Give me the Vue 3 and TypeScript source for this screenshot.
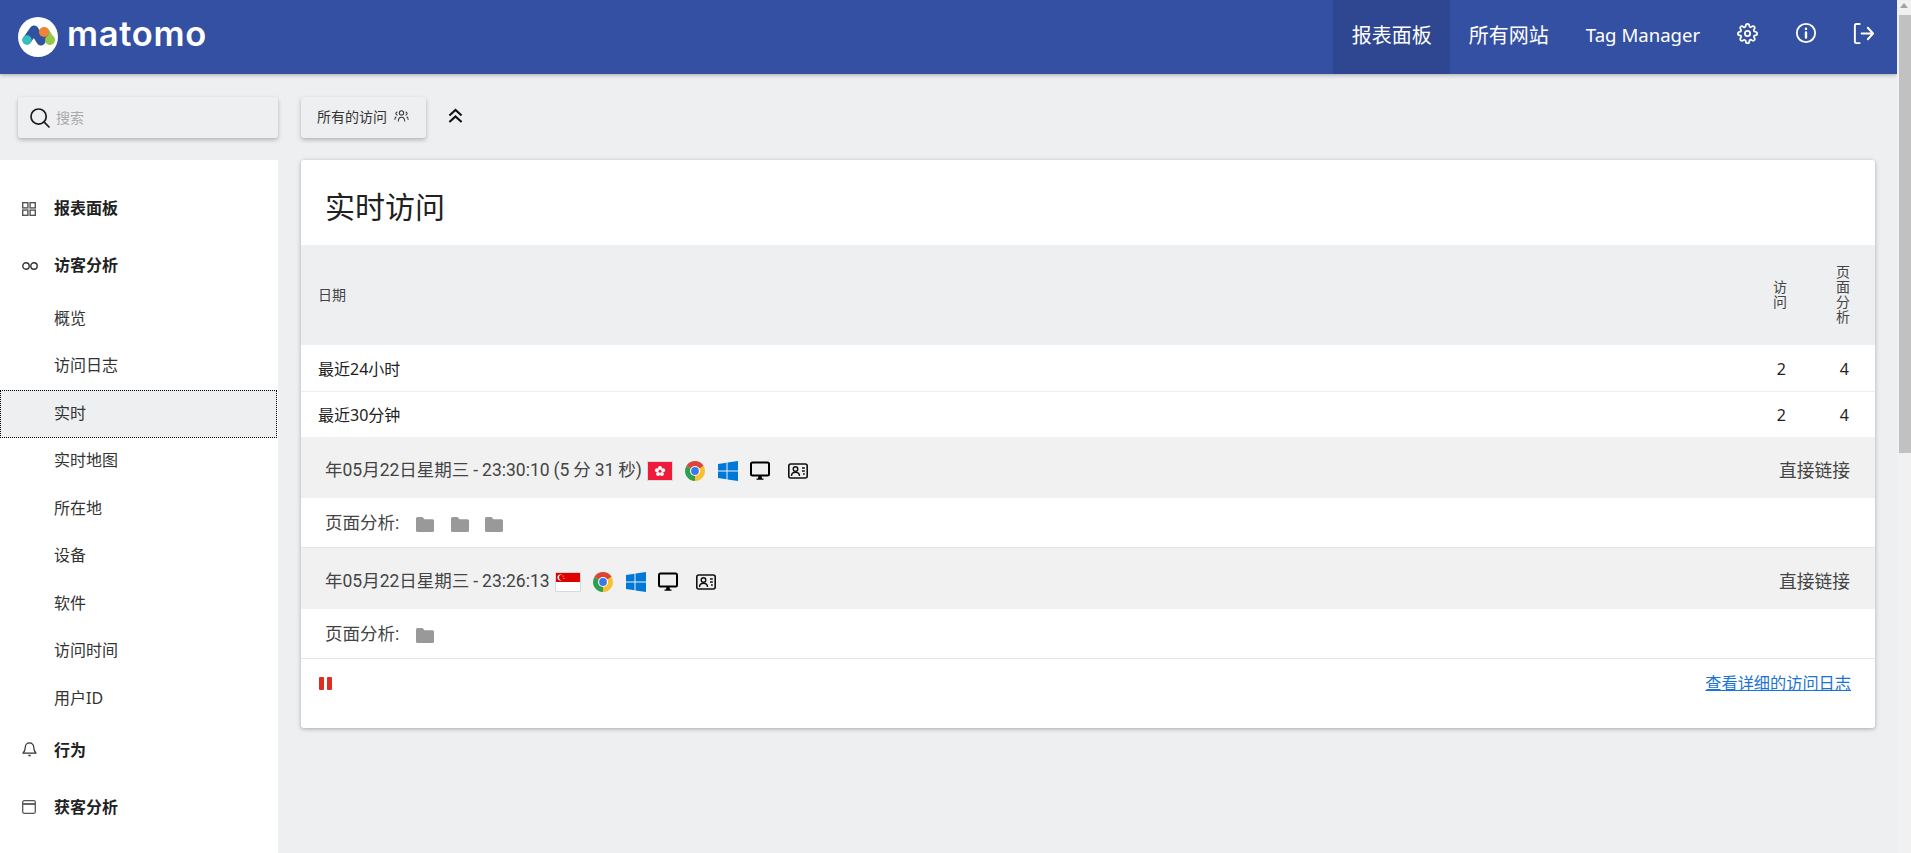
<script setup lang="ts">
interface Visit {
  time: string
  flag: 'hk' | 'sg'
  pages: number
}
const subItems: string[] = ['概览', '访问日志', '实时', '实时地图', '所在地', '设备', '软件', '访问时间', '用户ID']
const visits: Visit[] = [
  { time: '年05月22日星期三 - 23:30:10 (5 分 31 秒)', flag: 'hk', pages: 3 },
  { time: '年05月22日星期三 - 23:26:13', flag: 'sg', pages: 1 },
]
const rows = [
  { label: '最近24小时', visits: 2, pages: 4 },
  { label: '最近30分钟', visits: 2, pages: 4 },
]
const gearPath =
  'M19.4 15a1.65 1.65 0 0 0 .33 1.82l.06.06a2 2 0 0 1 0 2.83 2 2 0 0 1-2.83 0l-.06-.06a1.65 1.65 0 0 0-1.82-.33 1.65 1.65 0 0 0-1 1.51V21a2 2 0 0 1-2 2 2 2 0 0 1-2-2v-.09A1.65 1.65 0 0 0 9 19.4a1.65 1.65 0 0 0-1.82.33l-.06.06a2 2 0 0 1-2.83 0 2 2 0 0 1 0-2.83l.06-.06a1.65 1.65 0 0 0 .33-1.82 1.65 1.65 0 0 0-1.51-1H3a2 2 0 0 1-2-2 2 2 0 0 1 2-2h.09A1.65 1.65 0 0 0 4.6 9a1.65 1.65 0 0 0-.33-1.82l-.06-.06a2 2 0 0 1 0-2.83 2 2 0 0 1 2.83 0l.06.06a1.65 1.65 0 0 0 1.82.33H9a1.65 1.65 0 0 0 1-1.51V3a2 2 0 0 1 2-2 2 2 0 0 1 2 2v.09a1.65 1.65 0 0 0 1 1.51 1.65 1.65 0 0 0 1.82-.33l.06-.06a2 2 0 0 1 2.83 0 2 2 0 0 1 0 2.83l-.06.06a1.65 1.65 0 0 0-.33 1.82V9a1.65 1.65 0 0 0 1.51 1H21a2 2 0 0 1 2 2 2 2 0 0 1-2 2h-.09a1.65 1.65 0 0 0-1.51 1z'
</script>

<template>
  <div class="root">
    <div class="page">
      <header class="topbar">
        <div class="brand">
          <svg class="logo" viewBox="0 0 40 40" width="40" height="40">
            <circle cx="20" cy="20" r="20" fill="#fff" />
            <path d="M27 15 L32 23" stroke="#95c748" stroke-width="9" stroke-linecap="round" fill="none" />
            <path d="M9 23 L16 13 L23 24 L26 16" stroke="#3152a0" stroke-width="9" stroke-linecap="round" stroke-linejoin="round" fill="none" />
            <circle cx="9" cy="23" r="4.7" fill="#35bfc0" />
            <circle cx="26" cy="15" r="5" fill="#f38334" />
            <circle cx="32" cy="23" r="5" fill="#95c748" />
          </svg>
          <span class="wordmark">matomo</span>
        </div>
        <nav class="nav">
          <a class="nav-item active">报表面板</a>
          <a class="nav-item">所有网站</a>
          <a class="nav-item tag">Tag Manager</a>
          <a class="nav-item icon-item">
            <svg viewBox="0 0 24 24" width="21" height="21" fill="none" stroke="#fff" stroke-width="2">
              <circle cx="12" cy="12" r="3" />
              <path :d="gearPath" />
            </svg>
          </a>
          <a class="nav-item icon-item">
            <svg viewBox="0 0 24 24" width="22" height="22" fill="none" stroke="#fff" stroke-width="2" stroke-linecap="round">
              <circle cx="12" cy="12" r="10" />
              <path d="M12 11.5v5.5M12 7.2v.3" stroke-width="2.6" />
            </svg>
          </a>
          <a class="nav-item icon-item exit-item">
            <svg viewBox="0 0 24 24" width="23" height="23" fill="none" stroke="#fff" stroke-width="2" stroke-linecap="round" stroke-linejoin="round">
              <path d="M8 2H4.5A1.5 1.5 0 0 0 3 3.5v17A1.5 1.5 0 0 0 4.5 22H8" />
              <path d="M10 12h12M16.5 6l5.5 6-5.5 6" />
            </svg>
          </a>
        </nav>
      </header>

      <div class="content">
        <div class="search">
          <svg viewBox="0 0 20 20" width="20" height="20" fill="none" stroke="#1c1c1c" stroke-width="1.7" stroke-linecap="round">
            <circle cx="8.6" cy="8.6" r="7.6" />
            <path d="M14.2 14.2l4.8 4.8" />
          </svg>
          <span class="placeholder">搜索</span>
        </div>
        <div class="toolbar">
          <div class="segment">
            <span class="segment-label">所有的访问</span>
            <svg viewBox="0 0 16 14" width="15" height="13" fill="none" stroke="#333" stroke-width="1.1">
              <circle cx="8" cy="3.2" r="2.3" />
              <path d="M4.5 12.5c0-2.600 1.200-4.700 3.500-4.700s3.500 2.100 3.500 4.700" />
              <path d="M3.700 2.200a1.700 1.700 0 0 0 0 3.400M12.300 2.200a1.700 1.700 0 0 1 0 3.400" />
              <path d="M.8 10.500c0-1.500.6-2.700 1.600-3.200M15.200 10.500c0-1.500-.6-2.700-1.600-3.200" />
            </svg>
          </div>
          <svg class="chevrons" viewBox="0 0 16 16" width="15" height="16" fill="none" stroke="#111" stroke-width="2.2">
            <path d="M1.5 7.5L8 1.5l6.5 6M1.5 14.5L8 8.5l6.5 6" />
          </svg>
        </div>

        <aside class="sidebar">
          <div class="top-item">
            <span class="side-icon">
              <svg viewBox="0 0 14 14" width="14" height="14" fill="none" stroke="#555" stroke-width="1.4">
                <rect x=".7" y=".7" width="5.2" height="5.2" />
                <rect x="8.1" y=".7" width="5.2" height="5.2" />
                <rect x=".7" y="8.1" width="5.2" height="5.2" />
                <rect x="8.1" y="8.1" width="5.2" height="5.2" />
              </svg>
            </span>
            报表面板
          </div>
          <div class="top-item">
            <span class="side-icon">
              <svg viewBox="0 0 16 8" width="16" height="8" fill="none" stroke="#333" stroke-width="1.4">
                <circle cx="4" cy="4" r="3.2" />
                <circle cx="12" cy="4" r="3.2" />
              </svg>
            </span>
            访客分析
          </div>
          <div v-for="s in subItems" :key="s" class="sub-item" :class="{ current: s === '实时' }">{{ s }}</div>
          <div class="top-item">
            <span class="side-icon bell">
              <svg viewBox="0 0 16 18" width="15" height="17" fill="none" stroke="#333" stroke-width="1.3" stroke-linejoin="round">
                <path d="M3.5 7.5a4.5 4.5 0 0 1 9 0c0 3.5.8 5 2.5 6.500H1c1.700-1.500 2.500-3 2.500-6.500z" />
                <path d="M6.800 16.500h2.400" stroke-width="1.600" />
              </svg>
            </span>
            行为
          </div>
          <div class="top-item">
            <span class="side-icon">
              <svg viewBox="0 0 14 14" width="14" height="14" fill="none" stroke="#555" stroke-width="1.3">
                <rect x=".7" y=".7" width="12.6" height="12.6" rx="1.500" />
                <path d="M.7 4h12.600" stroke-width="1.800" />
              </svg>
            </span>
            获客分析
          </div>
        </aside>

        <main class="card">
          <h2 class="title">实时访问</h2>
          <table class="stats">
            <thead>
              <tr>
                <th class="date-col">日期</th>
                <th class="num-col visits-col"><span class="stack">访问</span></th>
                <th class="num-col pages-col"><span class="stack">页面分析</span></th>
              </tr>
            </thead>
            <tbody>
              <tr v-for="r in rows" :key="r.label">
                <td class="date-col">{{ r.label }}</td>
                <td class="num-col visits-col">{{ r.visits }}</td>
                <td class="num-col pages-col">{{ r.pages }}</td>
              </tr>
            </tbody>
          </table>

          <section v-for="v in visits" :key="v.time" class="visit">
            <div class="visit-head">
              <span class="visit-time">{{ v.time }}</span>
              <svg v-if="v.flag === 'hk'" class="ic flag" viewBox="0 0 26 20" width="26" height="20">
                <rect x=".5" y=".5" width="25" height="19" fill="#ee1c3a" stroke="#d8d8d8" />
                <g fill="#fff">
                  <circle cx="13" cy="7" r="2" />
                  <circle cx="16.100" cy="9.300" r="2" />
                  <circle cx="14.900" cy="12.900" r="2" />
                  <circle cx="11.100" cy="12.900" r="2" />
                  <circle cx="9.900" cy="9.300" r="2" />
                </g>
                <circle cx="13" cy="10" r="1" fill="#ee1c3a" />
              </svg>
              <svg v-else class="ic flag" viewBox="0 0 26 20" width="26" height="20">
                <rect x=".5" y=".5" width="25" height="19" fill="#fff" stroke="#d8d8d8" />
                <rect x="1" y="1" width="24" height="9" fill="#e00000" />
                <circle cx="5.500" cy="5.500" r="3" fill="#fff" />
                <circle cx="6.800" cy="5.500" r="2.800" fill="#e00000" />
                <circle cx="8" cy="4" r=".6" fill="#fff" />
                <circle cx="9" cy="6.500" r=".6" fill="#fff" />
              </svg>
              <svg class="ic chrome" viewBox="0 0 20 20" width="20" height="20">
                <path d="M10 10L1.340 5A10 10 0 0 1 18.660 5Z" fill="#db4437" />
                <path d="M10 10L18.660 5A10 10 0 0 1 10 20Z" fill="#fbc02d" />
                <path d="M10 10L10 20A10 10 0 0 1 1.340 5Z" fill="#2e9e4f" />
                <circle cx="10" cy="10" r="5" fill="#fff" />
                <circle cx="10" cy="10" r="3.900" fill="#3b78e7" />
              </svg>
              <svg class="ic win" viewBox="0 0 20 20" width="20" height="20" fill="#0078d7">
                <path d="M0 3l8.500-1.200v7.700H0zM9.500 1.600L20 0v9.500H9.500zM0 10.500h8.500v7.700L0 17zM9.500 10.500H20V20L9.500 18.400z" />
              </svg>
              <svg class="ic mon" viewBox="0 0 20 20" width="20" height="20">
                <rect x="1" y="1.500" width="18" height="13" rx="1.500" fill="none" stroke="#000" stroke-width="2" />
                <path d="M8.500 15h3l.5 2.500h1.500v1.300h-7v-1.300H8z" fill="#000" />
              </svg>
              <svg class="ic contact" viewBox="0 0 20 16" width="20" height="16" fill="none" stroke="#111" stroke-width="1.400">
                <rect x=".8" y="1" width="18.400" height="14" rx="2" stroke-width="1.600" />
                <circle cx="7.500" cy="6" r="2.300" />
                <path d="M3.500 13c0-2.500 1.500-3.800 4-3.800s4 1.300 4 3.800" />
                <path d="M14 5h2.800M14 8h2.800M15 11h1.800" />
              </svg>
              <span class="direct">直接链接</span>
            </div>
            <div class="visit-pages">
              <span class="pages-label">页面分析:</span>
              <svg v-for="n in v.pages" :key="n" class="folder" viewBox="0 0 18 15" width="18" height="15">
                <path d="M1.500 0H6.500L8.500 2.200H16.500A1.500 1.500 0 0 1 18 3.700V13.500A1.500 1.500 0 0 1 16.500 15H1.500A1.500 1.500 0 0 1 0 13.500V1.500A1.500 1.500 0 0 1 1.500 0Z" fill="#999" />
              </svg>
            </div>
          </section>

          <footer class="card-foot">
            <span class="pause"><i></i><i></i></span>
            <a class="log-link">查看详细的访问日志</a>
          </footer>
        </main>
      </div>
    </div>
    <div class="scrollbar">
      <span class="arrow"></span>
      <span class="thumb"></span>
    </div>
  </div>
</template>

<style>
html, body { margin: 0; padding: 0; overflow: hidden; background: #eeeff1; }
</style>

<style scoped>
.root {
  display: flex;
  width: 1911px;
  height: 853px;
  overflow: hidden;
  font-family: "Noto Sans", "Noto Sans CJK SC", sans-serif;
  color: #212121;
  background: #eeeff1;
}
.page { width: 1897px; flex: none; display: flex; flex-direction: column; }
.topbar {
  height: 74px;
  flex: none;
  background: #3450a3;
  display: flex;
  justify-content: space-between;
  box-shadow: 0 1px 4px rgba(0, 0, 0, .3);
  position: relative;
}
.brand { display: flex; align-items: center; gap: 9px; padding-left: 18px; }
.logo { display: block; }
.wordmark {
  font-family: Inter, sans-serif;
  font-weight: 600;
  font-size: 34.500px;
  letter-spacing: .7px;
  color: #fff;
  line-height: 1;
  margin-top: -6px;
}
.nav { display: flex; margin-right: 1.300px; }
.nav-item {
  display: flex;
  align-items: center;
  padding: 0 18.500px 5px;
  color: #fff;
  font-size: 20px;
}
.nav-item.active { background: #2f4790; }
.nav-item.tag { font-size: 18.600px; }
.nav-item.icon-item { padding-bottom: 8px; }
.nav-item.exit-item { margin-left: -2.500px; margin-right: 2.500px; }
.content {
  display: grid;
  grid-template-columns: 278px 1fr;
  grid-template-rows: 41px 1fr;
  column-gap: 23px;
  row-gap: 22px;
  padding: 23px 22px 0 0;
  flex: 1;
  min-height: 0;
}
.search {
  margin-left: 18px;
  background: #eeeff1;
  border-radius: 3px;
  box-shadow: 0 2px 4px rgba(0, 0, 0, .25);
  display: flex;
  align-items: center;
  padding-left: 12px;
  gap: 6px;
}
.placeholder { color: #aaa; font-size: 14px; margin-top: -2px; }
.toolbar { display: flex; align-items: center; gap: 22px; }
.segment {
  width: 125px;
  height: 41px;
  box-sizing: border-box;
  padding-left: 16px;
  display: flex;
  align-items: center;
  gap: 7px;
  font-size: 14px;
  color: #333;
  border-radius: 3px;
  box-shadow: 0 2px 4px rgba(0, 0, 0, .25);
}
.segment-label { margin-top: -4px; }
.segment svg { margin-top: -3px; }
.chevrons { margin-top: -4px; }
.sidebar { background: #fff; padding-top: 21px; }
.top-item {
  height: 57px;
  box-sizing: border-box;
  padding-bottom: 5px;
  display: flex;
  align-items: center;
  font-size: 16px;
  font-weight: 700;
}
.side-icon { width: 54px; padding-left: 22px; box-sizing: border-box; display: flex; flex: none; }
.side-icon svg { display: block; margin-top: 3px; }
.side-icon.bell svg { margin-top: -1px; }
.sub-item {
  height: 47.500px;
  box-sizing: border-box;
  padding: 0 0 4px 54px;
  display: flex;
  align-items: center;
  font-size: 16px;
  color: #333;
}
.sub-item.current {
  background: #eeeff1;
  border: 1px dotted #000;
  padding-left: 53px;
  margin-right: 1px;
}
.card {
  background: #fff;
  border-radius: 3px;
  box-shadow: 0 1px 4px rgba(0, 0, 0, .3);
  align-self: start;
  height: 568px;
  display: flex;
  flex-direction: column;
}
.title {
  margin: 0;
  height: 85px;
  box-sizing: border-box;
  padding: 25px 0 0 24px;
  font-size: 30px;
  font-weight: 400;
  line-height: 44px;
  color: #212121;
}
.stats { width: 100%; border-collapse: collapse; table-layout: fixed; flex: none; }
.stats th {
  height: 100px;
  padding: 0 0 2px;
  box-sizing: border-box;
  background: #eeeff1;
  font-size: 14px;
  font-weight: 400;
  color: #444;
  vertical-align: middle;
}
.stats th.date-col { text-align: left; padding-left: 17px; }
.stats td {
  padding: 2px 0 0;
  font-size: 16px;
  line-height: 22px;
  color: #212121;
  height: 46px;
  box-sizing: border-box;
  border-bottom: 1px solid #eee;
}
.stats tr:last-child td { border-bottom: none; height: 46px; }
.stats td.date-col { padding-left: 17px; }
.num-col { text-align: right; }
.visits-col { width: 64px; }
.pages-col { width: 89px; padding-right: 26px !important; box-sizing: border-box; }
.stack {
  display: inline-block;
  width: 14px;
  line-height: 15px;
  word-break: break-all;
  text-align: center;
  margin: 2px -1px 0 0;
}
.visit { flex: none; }
.visit-head {
  height: 61px;
  background: #f1f1f1;
  display: flex;
  align-items: center;
  padding: 0 25px 0 24px;
  font-family: Roboto, "Noto Sans CJK SC", sans-serif;
  font-size: 17.500px;
  color: #444;
  box-sizing: border-box;
}
.visit-time { margin-top: 2px; white-space: nowrap; word-spacing: -.4px; }
.ic { flex: none; display: block; margin-top: 7px; }
.flag { margin-left: 5px; }
.chrome { margin-left: 12px; }
.win { margin-left: 13px; }
.mon { margin-left: 12px; }
.contact { margin-left: 18px; }
.direct { margin-left: auto; font-size: 17.750px; margin-top: 2px; }
.visit-pages {
  height: 50px;
  box-sizing: border-box;
  border-bottom: 1px solid #e4e4e4;
  display: flex;
  align-items: center;
  padding-left: 24px;
  font-family: Roboto, "Noto Sans CJK SC", sans-serif;
  font-size: 17.500px;
  color: #444;
}
.pages-label { margin-right: 17px; margin-top: -3px; }
.folder { margin-right: 16.500px; flex: none; margin-top: 4px; }
.card-foot {
  flex: 1;
  display: flex;
  justify-content: space-between;
  padding: 18px 24px 0 18px;
}
.pause { display: flex; gap: 3px; height: 13px; }
.pause i { display: block; width: 5px; height: 13px; background: #dd2e22; border-radius: 1px; }
.log-link {
  font-size: 16.200px;
  line-height: 14px;
  color: #1a73d8;
  text-decoration: underline;
  margin-top: -1px;
  height: 14px;
}
.scrollbar { width: 14px; flex: none; background: #f1f1f1; position: relative; }
.arrow {
  position: absolute;
  left: 3px;
  top: 3px;
  width: 0;
  height: 0;
  border-left: 4px solid transparent;
  border-right: 4px solid transparent;
  border-bottom: 5px solid #a3a3a3;
}
.thumb {
  position: absolute;
  left: 2px;
  right: 0;
  top: 15px;
  height: 438px;
  background: #c1c1c1;
}
</style>
